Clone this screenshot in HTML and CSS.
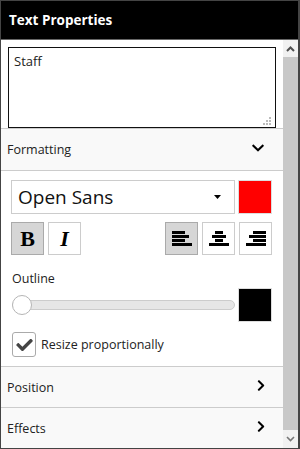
FILE: index.html
```html
<!DOCTYPE html>
<html>
<head>
<meta charset="utf-8">
<link rel="stylesheet" href="styles.css">
</head>
<body>
<div class="panel">
  <div class="header">Text Properties</div>
  <div class="main">
    <div class="content">
      <div class="text-section">
        <div class="ta-wrap">
          <textarea class="ta">Staff</textarea>
          <svg class="grip" width="9" height="9" viewBox="0 0 9 9">
            <rect x="6" y="0" width="2" height="2" fill="#bbb"/>
            <rect x="3" y="3" width="2" height="2" fill="#bbb"/>
            <rect x="6" y="3" width="2" height="2" fill="#bbb"/>
            <rect x="0" y="6" width="2" height="2" fill="#bbb"/>
            <rect x="3" y="6" width="2" height="2" fill="#bbb"/>
            <rect x="6" y="6" width="2" height="2" fill="#bbb"/>
          </svg>
        </div>
      </div>
      <div class="acc-head">
        <span>Formatting</span>
        <svg class="chev-down" width="12" height="8" viewBox="0 118 448 276"><path d="M207.029 381.476L12.686 187.132c-9.373-9.373-9.373-24.569 0-33.941l22.667-22.667c9.357-9.357 24.522-9.375 33.901-.04L224 284.505l154.745-154.021c9.379-9.335 24.544-9.317 33.901.04l22.667 22.667c9.373 9.373 9.373 24.569 0 33.941L240.971 381.476c-9.373 9.372-24.569 9.372-33.942 0z" fill="#000"/></svg>
      </div>
      <div class="fmt">
        <div class="row">
          <div class="select">
            <span>Open Sans</span>
            <svg width="7" height="4" viewBox="0 0 7 4"><path d="M0 0H7L3.5 4Z" fill="#000"/></svg>
          </div>
          <div class="swatch red"></div>
        </div>
        <div class="row row-btns">
          <div class="grp">
            <div class="btn active b">B</div>
            <div class="btn i">I</div>
          </div>
          <div class="grp">
            <div class="btn active">
              <svg width="20" height="15" viewBox="0 0 20 15">
                <rect x="0" y="0" width="13" height="3" fill="#000"/>
                <rect x="0" y="4" width="17" height="3" fill="#000"/>
                <rect x="0" y="8" width="13" height="3" fill="#000"/>
                <rect x="0" y="12" width="20" height="3" fill="#000"/>
              </svg>
            </div>
            <div class="btn">
              <svg width="20" height="15" viewBox="0 0 20 15">
                <rect x="6" y="0" width="8" height="3" fill="#000"/>
                <rect x="3" y="4" width="14" height="3" fill="#000"/>
                <rect x="6" y="8" width="8" height="3" fill="#000"/>
                <rect x="0" y="12" width="20" height="3" fill="#000"/>
              </svg>
            </div>
            <div class="btn">
              <svg width="20" height="15" viewBox="0 0 20 15">
                <rect x="7" y="0" width="13" height="3" fill="#000"/>
                <rect x="3" y="4" width="17" height="3" fill="#000"/>
                <rect x="7" y="8" width="13" height="3" fill="#000"/>
                <rect x="0" y="12" width="20" height="3" fill="#000"/>
              </svg>
            </div>
          </div>
        </div>
        <div class="label">Outline</div>
        <div class="row row-slider">
          <div class="slider">
            <div class="track"></div>
            <div class="thumb"></div>
          </div>
          <div class="swatch black"></div>
        </div>
        <div class="check-row">
          <div class="cb">
            <svg width="17" height="12" viewBox="0 70 512 372"><path d="M173.898 439.404l-166.4-166.4c-9.997-9.997-9.997-26.206 0-36.204l36.203-36.204c9.997-9.998 26.207-9.998 36.204 0L192 312.69 432.095 72.596c9.997-9.997 26.207-9.997 36.204 0l36.203 36.204c9.997 9.997 9.997 26.206 0 36.204l-294.4 294.401c-9.998 9.997-26.207 9.997-36.204-.001z" fill="#444"/></svg>
          </div>
          <span>Resize proportionally</span>
        </div>
      </div>
      <div class="acc-head small">
        <span>Position</span>
        <svg class="chev-right" width="8" height="11" viewBox="20 30 280 450"><path d="M285.476 272.971L91.132 467.314c-9.373 9.373-24.569 9.373-33.941 0l-22.667-22.667c-9.357-9.357-9.375-24.522-.04-33.901L188.505 256 34.484 101.255c-9.335-9.379-9.317-24.544.04-33.901l22.667-22.667c9.373-9.373 24.569-9.373 33.941 0L285.475 239.03c9.373 9.372 9.373 24.568.001 33.941z" fill="#000"/></svg>
      </div>
      <div class="acc-head small last">
        <span>Effects</span>
        <svg class="chev-right" width="8" height="11" viewBox="20 30 280 450"><path d="M285.476 272.971L91.132 467.314c-9.373 9.373-24.569 9.373-33.941 0l-22.667-22.667c-9.357-9.357-9.375-24.522-.04-33.901L188.505 256 34.484 101.255c-9.335-9.379-9.317-24.544.04-33.901l22.667-22.667c9.373-9.373 24.569-9.373 33.941 0L285.475 239.03c9.373 9.372 9.373 24.568.001 33.941z" fill="#000"/></svg>
      </div>
    </div>
    <div class="scrollbar">
      <div class="sb-btn up">
        <svg width="9" height="6" viewBox="0 0 9 6"><path d="M1 5L4.5 1.5L8 5" stroke="#505050" stroke-width="2" fill="none"/></svg>
      </div>
      <div class="sb-thumb"></div>
      <div class="sb-btn down">
        <svg width="9" height="6" viewBox="0 0 9 6"><path d="M1 1L4.5 4.5L8 1" stroke="#777" stroke-width="1.6" fill="none"/></svg>
      </div>
    </div>
  </div>
</div>
</body>
</html>
```

FILE: styles.css
```css
* { box-sizing: border-box; }
html, body { margin: 0; padding: 0; background: #fff; }
body { font-family: "Open Sans", "Noto Sans", sans-serif; color: #111; }

.panel {
  width: 300px;
  height: 449px;
  border: 1px solid #444;
  border-right-width: 2px;
  display: flex;
  flex-direction: column;
  overflow: hidden;
}

.header {
  height: 39px;
  flex: none;
  background: #000;
  color: #fff;
  font-weight: 700;
  font-size: 13.5px;
  line-height: 38px;
  padding-left: 8px;
  border-bottom: 1px solid #666;
}

.main {
  flex: 1;
  display: flex;
  min-height: 0;
}

.content {
  flex: 1;
  display: flex;
  flex-direction: column;
  min-width: 0;
}

.text-section {
  padding: 7px 7px 0 7px;
  border-bottom: 1px solid #ccc;
}

.ta-wrap {
  position: relative;
  height: 81px;
}

.ta {
  display: block;
  width: 100%;
  height: 81px;
  margin: 0;
  border: 1px solid #111;
  border-radius: 0;
  padding: 4px 5px;
  font-family: "Open Sans", "Noto Sans", sans-serif;
  font-size: 13px;
  line-height: 18px;
  color: #222;
  resize: none;
  outline: none;
  background: #fff;
}

.grip {
  position: absolute;
  right: 4px;
  bottom: 2px;
}

.acc-head {
  height: 42px;
  flex: none;
  background: #f9f9f9;
  border-bottom: 1px solid #ccc;
  display: flex;
  align-items: center;
  justify-content: space-between;
  padding: 0 19px 0 6px;
  font-size: 12.5px;
  color: #222;
}

.acc-head .chev-down { margin-top: -3px; }

.acc-head.small {
  height: 41px;
  padding-right: 18px;
}

.acc-head.small .chev-right { margin-top: -4px; }

.acc-head.last {
  height: 40px;
  border-bottom: none;
}

.fmt {
  padding: 9px 11px 9px 10px;
  border-bottom: 1px solid #ccc;
}

.row {
  display: flex;
  justify-content: space-between;
  align-items: center;
}

.select {
  width: 224px;
  height: 34px;
  border: 1px solid #ccc;
  display: flex;
  align-items: center;
  justify-content: space-between;
  padding: 0 13px 0 6px;
  font-size: 19px;
  color: #111;
}

.swatch {
  width: 34px;
  height: 34px;
  border: 1px solid #ddd;
}
.swatch.red { background: #ff0000; }
.swatch.black { background: #000; }

.row-btns {
  margin-top: 8px;
}

.grp {
  display: flex;
  gap: 4px;
}

.btn {
  width: 33px;
  height: 33px;
  border: 1px solid #ccc;
  background: #fff;
  display: flex;
  align-items: center;
  justify-content: center;
  font-family: "Liberation Serif", "DejaVu Serif", serif;
  font-size: 22px;
  font-weight: 700;
  color: #000;
}

.btn.active {
  background: #d6d6d6;
  border-color: #aaa;
}

.btn.i { font-style: italic; }

.label {
  margin-top: 16px;
  font-size: 12.5px;
  line-height: 16px;
  color: #222;
  padding-left: 1px;
}

.row-slider {
  margin-top: 1px;
}

.slider {
  position: relative;
  width: 224px;
  height: 34px;
  display: flex;
  align-items: center;
}

.track {
  width: 100%;
  height: 10px;
  margin-left: 1px;
  background: #e6e6e6;
  border: 1px solid #ccc;
  border-radius: 5px;
}

.thumb {
  position: absolute;
  left: 1px;
  top: 7px;
  width: 20px;
  height: 20px;
  border-radius: 50%;
  background: #fff;
  border: 1px solid #b5b5b5;
}

.check-row {
  margin-top: 10px;
  display: flex;
  align-items: center;
  gap: 5px;
  font-size: 12.5px;
  color: #222;
}

.cb {
  width: 24px;
  height: 25px;
  margin-left: 1px;
  border: 1px solid #aaa;
  border-radius: 3px;
  background: #fff;
  display: flex;
  align-items: center;
  justify-content: center;
}

.scrollbar {
  width: 15px;
  flex: none;
  display: flex;
  flex-direction: column;
  background: #f1f1f1;
}

.sb-btn {
  height: 17px;
  flex: none;
  background: #f1f1f1;
  display: flex;
  align-items: center;
  justify-content: center;
}

.sb-btn.down { height: 18px; }

.sb-thumb {
  flex: 1;
  background: #c8c8c8;
}
```
